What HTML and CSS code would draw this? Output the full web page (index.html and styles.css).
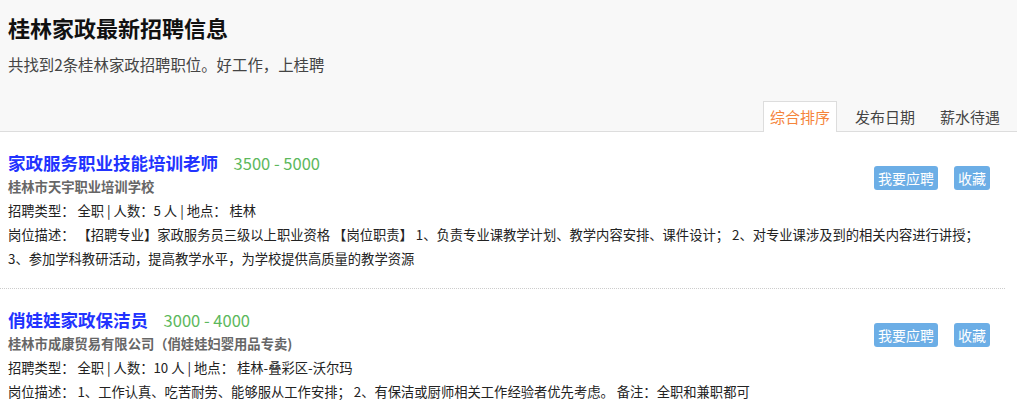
FILE: index.html
```html
<!DOCTYPE html>
<html lang="zh-CN">
<head>
    <meta charset="UTF-8">
    <meta name="viewport" content="width=device-width, initial-scale=1.0">
    <title>桂林家政最新招聘信息</title>
    <link rel="stylesheet" href="styles.css">
</head>
<body>
    <div class="header">
        <h1>桂林家政最新招聘信息</h1>
        <p class="sub">共找到2条桂林家政招聘职位。好工作，上桂聘</p>
        <div class="tabs">
            <span class="tab active">综合排序</span>
            <span class="tab">发布日期</span>
            <span class="tab">薪水待遇</span>
        </div>
    </div>

    <!-- Job list -->
    <div class="job">
        <div class="actions">
            <a class="btn">我要应聘</a>
            <a class="btn">收藏</a>
        </div>
        <div class="job-title">
            <a class="name">家政服务职业技能培训老师</a>
            <span class="salary">3500 - 5000</span>
        </div>
        <div class="company">桂林市天宇职业培训学校</div>
        <div class="line">招聘类型： 全职 | 人数：5 人 | 地点： 桂林</div>
        <div class="line">岗位描述： 【招聘专业】家政服务员三级以上职业资格 【岗位职责】 1、负责专业课教学计划、教学内容安排、课件设计； 2、对专业课涉及到的相关内容进行讲授；<br>3、参加学科教研活动，提高教学水平，为学校提供高质量的教学资源</div>
    </div>
    <div class="job">
        <div class="actions">
            <a class="btn">我要应聘</a>
            <a class="btn">收藏</a>
        </div>
        <div class="job-title">
            <a class="name">俏娃娃家政保洁员</a>
            <span class="salary">3000 - 4000</span>
        </div>
        <div class="company">桂林市成康贸易有限公司（俏娃娃妇婴用品专卖)</div>
        <div class="line">招聘类型： 全职 | 人数：10 人 | 地点： 桂林-叠彩区-沃尔玛</div>
        <div class="line">岗位描述： 1、工作认真、吃苦耐劳、能够服从工作安排； 2、有保洁或厨师相关工作经验者优先考虑。 备注：全职和兼职都可</div>
    </div>
</body>
</html>
```

FILE: styles.css
```css
body {
    margin: 0;
    font-family: "Noto Sans CJK SC", "Noto Sans", sans-serif;
    color: #333;
    background: #fff;
}

/* Header */
.header {
    background-color: #f8f8f8;
    border-bottom: 1px solid #ddd;
    padding: 11px 0 0 8px;
}
.header h1 {
    margin: 0;
    font-size: 22px;
    line-height: 33px;
    color: #111;
}
.sub {
    margin: 8px 0 0;
    font-size: 15.4px;
    line-height: 25px;
    color: #444;
}
.tabs {
    display: flex;
    justify-content: flex-end;
    margin-top: 24px;
    padding-right: 10px;
}
.tab {
    font-size: 15px;
    line-height: 29px;
    padding: 0 6px;
    margin-left: 11px;
    color: #444;
    border: 1px solid transparent;
    border-bottom: none;
}
.tab.active {
    color: #f5843b;
    background: #fff;
    border-color: #ddd;
    margin-bottom: -1px;
    line-height: 30px;
}

/* Jobs */
.job {
    margin-right: 12px;
    padding: 17px 15px 17px 8px;
    border-bottom: 1px dotted #ccc;
}
.job:last-child {
    border-bottom: none;
}
.actions {
    float: right;
    margin-top: 17px;
    display: flex;
    gap: 16px;
}
.btn {
    display: inline-block;
    font-size: 14px;
    line-height: 24px;
    padding: 0 4px;
    color: #fff;
    background-color: #6caee6;
    border-radius: 3px;
    cursor: pointer;
}
.job-title {
    line-height: 26px;
    margin-top: 1px;
    margin-bottom: -1px;
}
.name {
    font-size: 17.5px;
    font-weight: bold;
    color: #2233ff;
    text-decoration: none;
}
.salary {
    font-size: 16.5px;
    color: #5cb85c;
    margin-left: 12px;
}
.company {
    font-size: 13.3px;
    font-weight: bold;
    color: #666;
    line-height: 24px;
}
.line {
    font-size: 13.3px;
    line-height: 24px;
    color: #222;
}
```
